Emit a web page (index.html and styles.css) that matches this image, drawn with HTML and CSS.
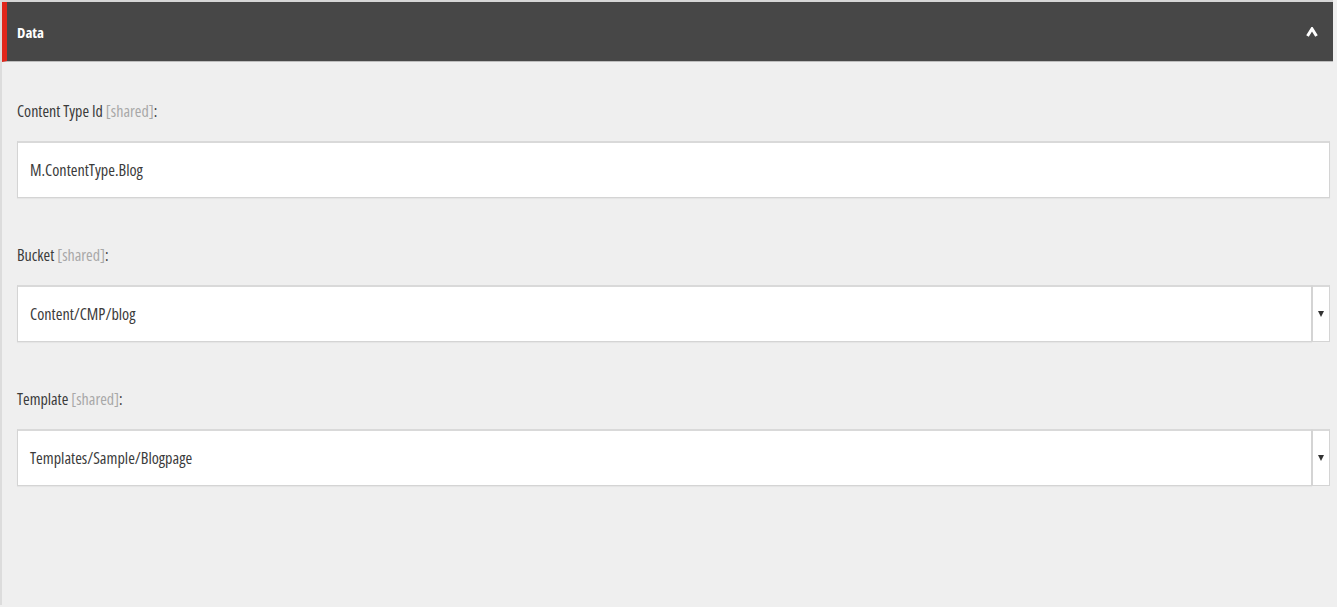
FILE: index.html
```html
<!DOCTYPE html>
<html>
<head>
<meta charset="utf-8">
<link rel="stylesheet" href="styles.css">
</head>
<body>
<div class="panel">
  <div class="header">
    <span class="title">Data</span>
    <svg class="chevron" width="12" height="10" viewBox="0 0 12 10"><polyline points="1.5,9 6,1.8 10.5,9" fill="none" stroke="#fff" stroke-width="3" stroke-linejoin="miter"/></svg>
  </div>
  <div class="content">
    <div class="field">
      <div class="label">Content Type Id <span class="shared">[shared]</span>:</div>
      <div class="input">M.ContentType.Blog</div>
    </div>
    <div class="field">
      <div class="label">Bucket <span class="shared">[shared]</span>:</div>
      <div class="select">
        <div class="select-value">Content/CMP/blog</div>
        <div class="select-btn"><span class="tri"></span></div>
      </div>
    </div>
    <div class="field">
      <div class="label">Template <span class="shared">[shared]</span>:</div>
      <div class="select">
        <div class="select-value">Templates/Sample/Blogpage</div>
        <div class="select-btn"><span class="tri"></span></div>
      </div>
    </div>
  </div>
</div>
</body>
</html>
```
FILE: styles.css
```css
html, body {
  margin: 0;
  padding: 0;
  background: #efefef;
  height: 100%;
}
body {
  font-family: "Open Sans", "DejaVu Sans", sans-serif;
  font-stretch: 80%;
  color: #333;
}
.panel {
  border-top: 2px solid #d6d6d6;
  border-left: 2px solid #dcdcdc;
  min-height: 605px;
  box-sizing: border-box;
  margin-right: 4px;
}
.header {
  height: 59px;
  background: #474747;
  border-left: 5px solid #e0261b;
  border-bottom: 1px solid #bdbdbd;
  display: flex;
  align-items: center;
  justify-content: space-between;
  padding: 0 15px 0 10px;
}
.title {
  color: #fff;
  font-weight: 700;
  font-size: 15px;
}
.chevron { display: block; margin-top: 1px; }
.content {
  padding: 38px 3px 0 15px;
}
.field {
  margin-bottom: 46px;
}
.label {
  font-size: 16px;
  line-height: 22px;
  margin-bottom: 19px;
  color: #3b3b3b;
  font-weight: 370;
}
.shared { color: #a8a8a8; }
.input, .select-value {
  background: #fff;
  border: 1px solid #d4d4d4;
  border-top: 2px solid #d9d9d9;
  box-shadow: 0 1px 1px rgba(0,0,0,0.04);
  height: 54px;
  display: flex;
  align-items: center;
  padding-left: 12px;
  font-size: 16.2px;
  color: #3b3b3b;
  font-weight: 370;
}
.select {
  display: flex;
}
.select-value { flex: 1; }
.select-btn {
  width: 16px;
  background: #fff;
  border: 1px solid #d4d4d4;
  border-top: 2px solid #d9d9d9;
  height: 54px;
  display: flex;
  align-items: center;
  justify-content: center;
}
.tri {
  width: 0;
  height: 0;
  border-left: 3.5px solid transparent;
  border-right: 3.5px solid transparent;
  border-top: 6px solid #333;
}
```
